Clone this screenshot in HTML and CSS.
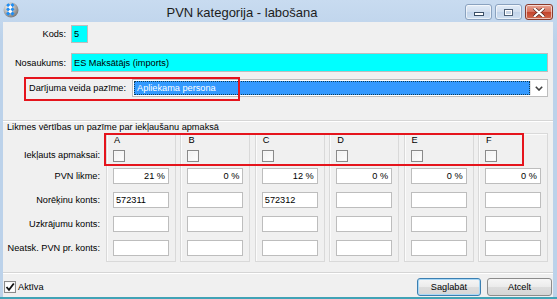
FILE: index.html
```html
<!DOCTYPE html>
<html>
<head>
<meta charset="utf-8">
<link rel="stylesheet" href="styles.css">
</head>
<body>
<div class="window">
  <div class="titlebar">
    <svg class="app-icon" viewBox="0 0 16 16" width="16" height="16">
      <defs>
        <radialGradient id="g" cx="0.35" cy="0.3" r="0.8">
          <stop offset="0" stop-color="#f4f4f4"/>
          <stop offset="1" stop-color="#707070"/>
        </radialGradient>
        <clipPath id="c"><circle cx="8" cy="8" r="7.2"/></clipPath>
      </defs>
      <circle cx="8" cy="8" r="7.5" fill="url(#g)"/>
      <g clip-path="url(#c)" transform="rotate(45 8 8)">
        <rect x="4" y="2" width="3" height="3" fill="#1f8ef5"/>
        <rect x="7" y="5" width="3" height="3" fill="#1f8ef5"/>
        <rect x="4" y="8" width="3" height="3" fill="#1f8ef5"/>
        <rect x="10" y="8" width="3" height="3" fill="#1f8ef5"/>
        <rect x="7" y="11" width="3" height="3" fill="#1f8ef5"/>
        <rect x="1" y="5" width="3" height="3" fill="#1f8ef5"/>
        <rect x="7" y="8" width="3" height="3" fill="#ffffff"/>
        <rect x="4" y="5" width="3" height="3" fill="#ffffff"/>
      </g>
    </svg>
    <div class="title">PVN kategorija - labošana</div>
    <div class="caption-buttons">
      <div class="cb cb-min"><span class="min-glyph"></span></div>
      <div class="cb cb-max"><span class="max-glyph"></span></div>
      <div class="cb cb-close">
        <svg viewBox="0 0 12 9" width="12" height="9"><path d="M1.5 0.5 L10.5 8.5 M10.5 0.5 L1.5 8.5" stroke="#4a1a12" stroke-width="3.4" stroke-linecap="round"/><path d="M1.5 0.5 L10.5 8.5 M10.5 0.5 L1.5 8.5" stroke="#ffffff" stroke-width="2.2" stroke-linecap="round"/></svg>
      </div>
    </div>
  </div>

  <div class="content">
    <div class="row row-kods">
      <div class="lbl">Kods:</div>
      <div class="field cyan kods">5</div>
    </div>
    <div class="row row-nos">
      <div class="lbl">Nosaukums:</div>
      <div class="field cyan nos">ES Maksātājs (imports)</div>
    </div>
    <div class="row row-dar">
      <div class="lbl-dar">Darījuma veida pazīme:</div>
      <div class="combo">
        <div class="combo-sel">Apliekama persona</div>
        <div class="combo-btn">
          <svg viewBox="0 0 8 5" width="8" height="5"><path d="M0.8 0.8 L4 4 L7.2 0.8" fill="none" stroke="#404040" stroke-width="1.6"/></svg>
        </div>
      </div>
    </div>

    <div class="sep"></div>
    <div class="legend">Likmes vērtības un pazīme par iekļaušanu apmaksā</div>

    <div class="rates">
      <div class="rate-labels">
        <div class="rl rl-check">Iekļauts apmaksai:</div>
        <div class="rl rl-first">PVN likme:</div>
        <div class="rl">Norēķinu konts:</div>
        <div class="rl">Uzkrājumu konts:</div>
        <div class="rl">Neatsk. PVN pr. konts:</div>
      </div>
      <div class="panels">
        <div class="panel">
          <div class="letter">A</div>
          <div class="chk"></div>
          <div class="field pf num">21 %</div>
          <div class="field pf">572311</div>
          <div class="field pf"></div>
          <div class="field pf"></div>
        </div>
        <div class="panel">
          <div class="letter">B</div>
          <div class="chk"></div>
          <div class="field pf num">0 %</div>
          <div class="field pf"></div>
          <div class="field pf"></div>
          <div class="field pf"></div>
        </div>
        <div class="panel">
          <div class="letter">C</div>
          <div class="chk"></div>
          <div class="field pf num">12 %</div>
          <div class="field pf">572312</div>
          <div class="field pf"></div>
          <div class="field pf"></div>
        </div>
        <div class="panel">
          <div class="letter">D</div>
          <div class="chk"></div>
          <div class="field pf num">0 %</div>
          <div class="field pf"></div>
          <div class="field pf"></div>
          <div class="field pf"></div>
        </div>
        <div class="panel">
          <div class="letter">E</div>
          <div class="chk"></div>
          <div class="field pf num">0 %</div>
          <div class="field pf"></div>
          <div class="field pf"></div>
          <div class="field pf"></div>
        </div>
        <div class="panel">
          <div class="letter">F</div>
          <div class="chk"></div>
          <div class="field pf num">0 %</div>
          <div class="field pf"></div>
          <div class="field pf"></div>
          <div class="field pf"></div>
        </div>
      </div>
    </div>

    <div class="sep sep-bottom"></div>

    <div class="footer">
      <div class="aktiva">
        <span class="chk chk-on"><svg viewBox="0 0 10 10" width="10" height="10"><path d="M1.5 5 L4 7.8 L8.8 1.5" fill="none" stroke="#111" stroke-width="1.8"/></svg></span>
        <span>Aktīva</span>
      </div>
      <div class="buttons">
        <div class="btn btn-default">Saglabāt</div>
        <div class="btn">Atcelt</div>
      </div>
    </div>
  </div>

  <div class="mark mark-dar"></div>
  <div class="mark mark-chk"></div>
</div>
</body>
</html>
```

FILE: styles.css
```css
* { box-sizing: border-box; }
html, body { margin: 0; padding: 0; }
body {
  width: 557px;
  height: 299px;
  overflow: hidden;
  font-family: "Liberation Sans", Arial, sans-serif;
  font-size: 9.2px;
  color: #000;
  background: #fff;
}

.window {
  position: relative;
  width: 557px;
  height: 299px;
  display: flex;
  flex-direction: column;
  background: linear-gradient(#c8dbf0, #bcd2ea 40px, #bcd2ea);
  border-bottom: 2px solid #41a3b6;
}

/* title bar */
.titlebar {
  height: 22px;
  flex: none;
  display: flex;
  align-items: flex-start;
  padding: 0 4px 0 3px;
}
.app-icon { margin-top: 2px; flex: none; }
.title {
  flex: 1;
  text-align: center;
  font-size: 13px;
  line-height: 16px;
  padding-top: 5px;
  color: #1c1c1c;
}
.caption-buttons {
  display: flex;
  gap: 3px;
  margin-top: 4px;
}
.cb {
  width: 27px;
  height: 16px;
  border: 1px solid #8aa2bf;
  border-radius: 3px;
  background: linear-gradient(#e3ecf7, #d0deef 50%, #c2d4ea 51%, #cfdff0);
  display: flex;
  align-items: center;
  justify-content: center;
  box-shadow: inset 0 0 0 1px rgba(255,255,255,0.6);
}
.cb-close {
  width: 28px;
  border-color: #8a3a2c;
  background: linear-gradient(#e9a595, #d5705c 50%, #c4432c 51%, #d06a4e);
}
.min-glyph {
  width: 10px;
  height: 4px;
  margin-top: 4px;
  background: #fff;
  border: 1px solid #3b4f66;
}
.max-glyph {
  width: 9px;
  height: 7px;
  border: 1px solid #4c5f76;
  box-shadow: inset 0 0 0 1px #fff;
  background: #c9d6e6;
}

/* content */
.content {
  flex: 1;
  margin: 0 4px 0 3px;
  background: #f0f0f0;
  display: flex;
  flex-direction: column;
}

.row { display: flex; align-items: center; }
.lbl {
  width: 63px;
  margin-right: 5px;
  text-align: right;
}
.field {
  background: #fff;
  border: 1px solid #bdbdbd;
  padding: 0 2px;
  display: flex;
  align-items: center;
  white-space: nowrap;
}
.cyan { background: #00ffff; }

.row-kods { margin-top: 3px; height: 18px; }
.kods { width: 17px; height: 18px; }
.row-nos { margin-top: 10px; height: 19px; }
.nos { width: 477px; height: 19px; }

.row-dar { margin-top: 7px; height: 18px; padding-left: 26px; }
.lbl-dar { width: 103px; }
.combo {
  width: 416px;
  height: 18px;
  border: 1px solid #bdbdbd;
  background: #fff;
  display: flex;
  padding: 1px;
}
.combo-sel {
  flex: 1;
  background: #3399ff;
  color: #fff;
  outline: 1px dotted #0c3d58;
  outline-offset: -1px;
  padding-left: 3px;
  line-height: 14px;
}
.combo-btn {
  width: 16px;
  display: flex;
  align-items: center;
  justify-content: center;
  border-left: 1px solid #e3e3e3;
}

.sep {
  height: 2px;
  border-top: 1px solid #d5d5d5;
  border-bottom: 1px solid #ffffff;
  margin-top: 23px;
}
.legend {
  padding-left: 4px;
  line-height: 10px;
  margin-top: 0;
  height: 11px;
}

/* rates */
.rates {
  display: flex;
  margin-top: 0;
}
.rate-labels {
  width: 97px;
  margin-right: 6px;
  display: flex;
  flex-direction: column;
  align-items: flex-end;
}
.rl {
  height: 16px;
  line-height: 16px;
  margin-top: 8px;
  white-space: nowrap;
}
.rl-check { margin-top: 16px; height: 12px; line-height: 12px; }
.rl.rl-first { margin-top: 7px; }

.panels {
  display: grid;
  grid-template-columns: repeat(6, 70px);
  column-gap: 4.4px;
}
.panel {
  height: 129px;
  border: 1px solid #d9d9d9;
  box-shadow: inset 1px 1px 0 #fbfbfb;
  padding: 1px 6px 5px 6px;
  display: flex;
  flex-direction: column;
}
.letter { line-height: 11px; height: 11px; padding-left: 1px; }
.chk {
  width: 12px;
  height: 12px;
  margin-top: 4px;
  border: 1px solid #8a8a8a;
  background: linear-gradient(135deg, #f0f0f0, #ffffff);
  box-shadow: inset 0 0 0 1px #f7f7f7;
}
.pf { height: 16px; width: 56px; margin-top: 8px; }
.chk + .pf { margin-top: 6px; }
.num { justify-content: flex-end; padding-right: 3px; }

.sep-bottom { margin-top: 10px; }

/* footer */
.footer {
  margin-top: 4px;
  height: 18px;
  display: flex;
  align-items: center;
  justify-content: space-between;
  padding: 0 1px;
}
.aktiva { display: flex; align-items: center; }
.chk-on {
  margin-top: 0;
  margin-right: 2px;
  display: flex;
  align-items: center;
  justify-content: center;
  background: #fff;
}
.buttons { display: flex; gap: 6px; }
.btn {
  width: 64px;
  height: 18px;
  border: 1px solid #8c8c8c;
  border-radius: 3px;
  background: linear-gradient(#f6f6f6, #ebebeb 50%, #dddddd 51%, #d6d6d6);
  text-align: center;
  line-height: 16px;
}
.btn + .btn { width: 65px; }
.btn-default {
  border-color: #3c7fb1;
  box-shadow: inset 0 0 0 1px #a8d8f6;
}

/* annotation overlays */
.mark {
  position: absolute;
  border: 2px solid #e5141c;
}
.mark-dar { left: 24px; top: 77px; width: 216px; height: 24px; }
.mark-chk { left: 104px; top: 133px; width: 420px; height: 33px; }
```
